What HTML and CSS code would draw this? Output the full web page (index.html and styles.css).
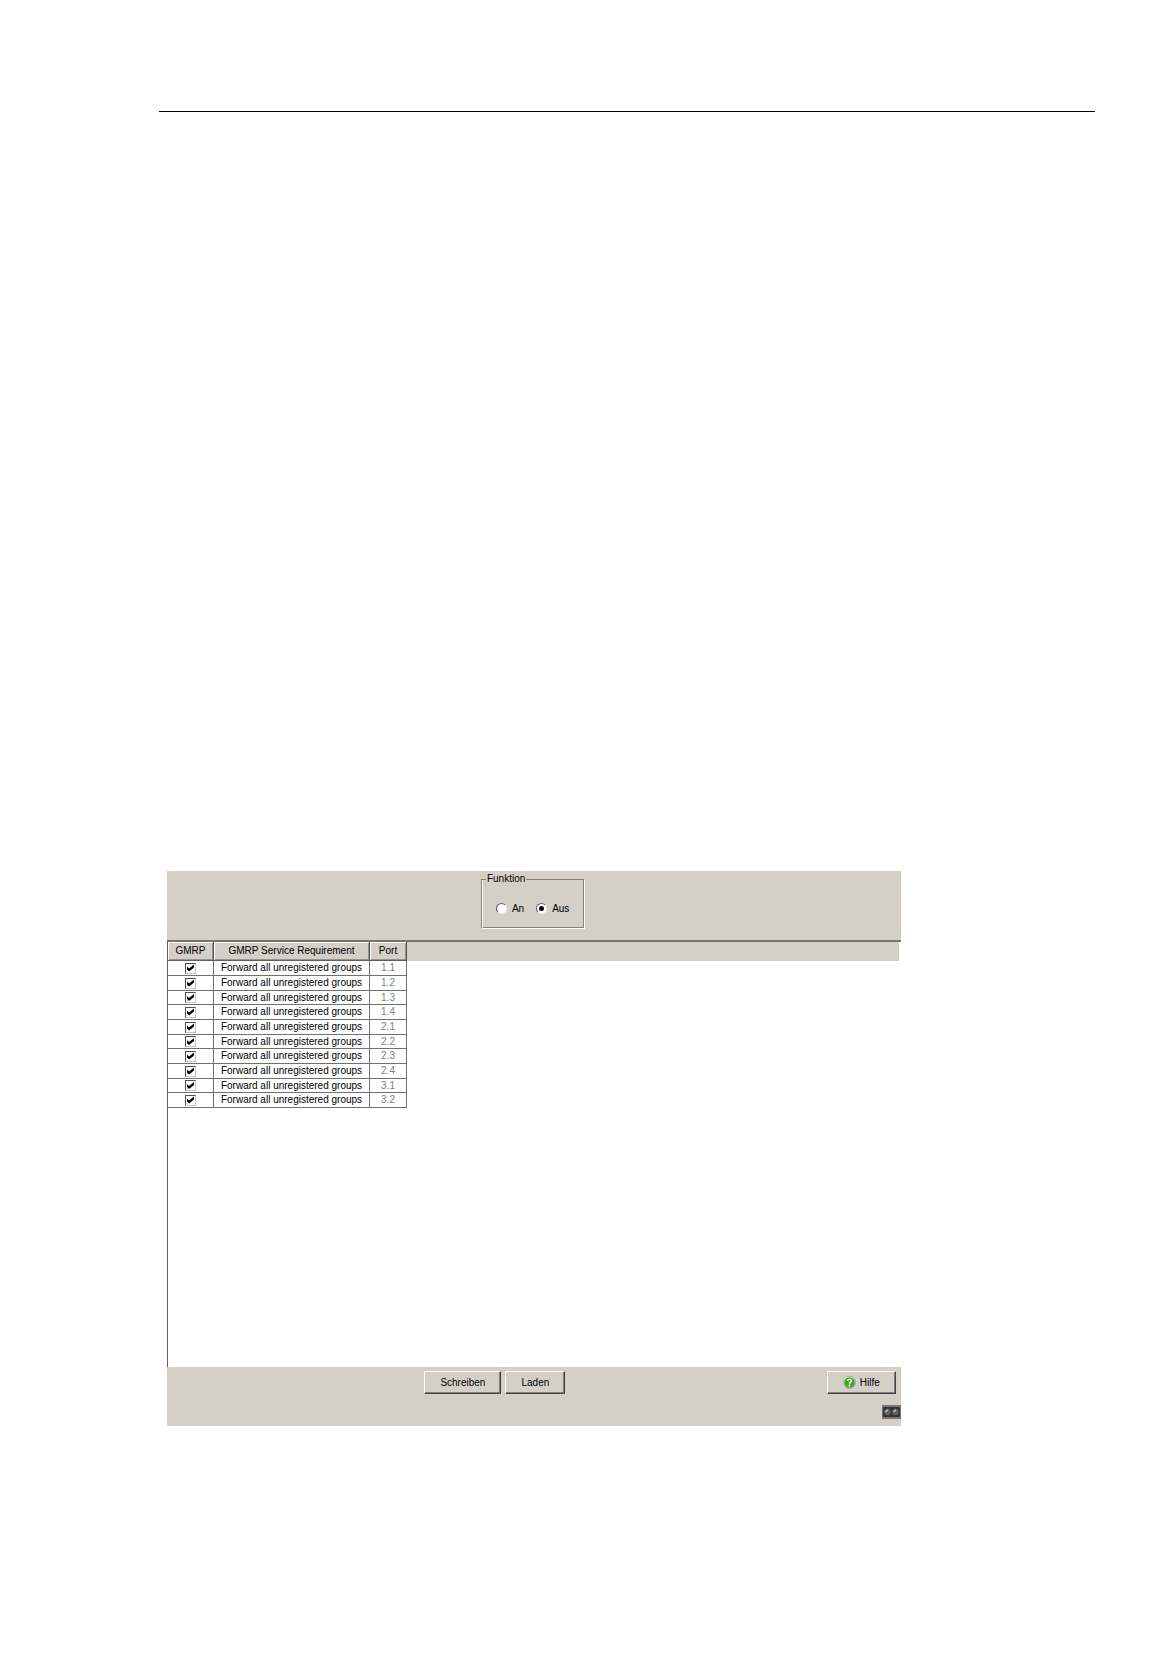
FILE: index.html
```html
<!DOCTYPE html>
<html lang="de">
<head>
<meta charset="utf-8">
<meta name="viewport" content="width=device-width, initial-scale=1">
<title>GMRP</title>
<link rel="stylesheet" href="styles.css">
</head>
<body>
<main class="page">
  <hr class="rule">
  <form class="panel">
    <div class="top">
      <fieldset class="group">
        <legend>Funktion</legend>
        <label class="option"><input type="radio" name="funktion" value="an">An</label>
        <label class="option"><input type="radio" name="funktion" value="aus" checked>Aus</label>
      </fieldset>
    </div>
    <div class="data">
      <div class="head-fill">
      <table class="ports">
        <thead>
          <tr><th class="c-gmrp">GMRP</th><th class="c-service">GMRP Service Requirement</th><th class="c-port">Port</th></tr>
        </thead>
        <tbody>
          <tr><td><input type="checkbox" aria-label="GMRP 1.1" checked></td><td>Forward all unregistered groups</td><td>1.1</td></tr>
          <tr><td><input type="checkbox" aria-label="GMRP 1.2" checked></td><td>Forward all unregistered groups</td><td>1.2</td></tr>
          <tr><td><input type="checkbox" aria-label="GMRP 1.3" checked></td><td>Forward all unregistered groups</td><td>1.3</td></tr>
          <tr><td><input type="checkbox" aria-label="GMRP 1.4" checked></td><td>Forward all unregistered groups</td><td>1.4</td></tr>
          <tr><td><input type="checkbox" aria-label="GMRP 2.1" checked></td><td>Forward all unregistered groups</td><td>2.1</td></tr>
          <tr><td><input type="checkbox" aria-label="GMRP 2.2" checked></td><td>Forward all unregistered groups</td><td>2.2</td></tr>
          <tr><td><input type="checkbox" aria-label="GMRP 2.3" checked></td><td>Forward all unregistered groups</td><td>2.3</td></tr>
          <tr><td><input type="checkbox" aria-label="GMRP 2.4" checked></td><td>Forward all unregistered groups</td><td>2.4</td></tr>
          <tr><td><input type="checkbox" aria-label="GMRP 3.1" checked></td><td>Forward all unregistered groups</td><td>3.1</td></tr>
          <tr><td><input type="checkbox" aria-label="GMRP 3.2" checked></td><td>Forward all unregistered groups</td><td>3.2</td></tr>
        </tbody>
      </table>
      </div>
    </div>
    <div class="bottom">
      <div class="actions">
        <div class="main-actions">
          <button type="button" class="btn btn-write">Schreiben</button>
          <button type="button" class="btn btn-load">Laden</button>
        </div>
        <button type="button" class="btn btn-help">
          <svg width="13" height="13" viewBox="0 0 13 13" aria-hidden="true">
            <circle cx="6.5" cy="6.5" r="6.4" fill="#8a9a86"/>
            <circle cx="6.3" cy="6.3" r="5.9" fill="#d5ead0"/>
            <circle cx="6.5" cy="6.5" r="5.3" fill="#3fa62f"/>
            <path d="M4.6 5.1C4.6 2.6 8.5 2.7 8.4 4.9C8.3 6.1 6.6 6.2 6.5 7.6" fill="none" stroke="#fff" stroke-width="1.4"/>
            <circle cx="6.5" cy="9.5" r="0.9" fill="#fff"/>
          </svg>
          Hilfe
        </button>
      </div>
      <svg class="status" width="19" height="14" viewBox="0 0 19 14" role="img" aria-label="Status">
        <rect width="19" height="14" fill="#777"/>
        <rect x="1" y="2" width="17" height="10" rx="1" fill="#343434"/>
        <circle cx="5.5" cy="7" r="3.2" fill="#626262"/>
        <circle cx="13.5" cy="7" r="3.2" fill="#626262"/>
        <path d="M3.4 7.2L6 4.6M11.4 7.2L14 4.6" stroke="#ccc" stroke-width="1.2"/>
      </svg>
    </div>
  </form>
</main>
</body>
</html>
```
FILE: styles.css
```css
* { box-sizing: border-box; }

body {
  margin: 0;
  background: #fff;
  color: #000;
  font: 10px/12px "Liberation Sans", Arial, sans-serif;
}

.page { padding: 111px 79px 240px 159px; }

.rule {
  height: 1px;
  margin: 0;
  border: 0;
  background: #000;
}

.panel {
  width: 78.4%;
  margin: 759px 0 0 8px;
}

.top {
  display: flex;
  justify-content: center;
  min-height: 71px;
  padding: 2px 2px 11px 0;
  background: #d4d0c8;
  border-bottom: 2px solid #77756f;
}

.group {
  display: flex;
  align-items: center;
  gap: 12px;
  width: 104px;
  margin: 0;
  padding: 4px 14px 0;
  border: 1px solid #808080;
  border-right-color: #fff;
  border-bottom-color: #fff;
  box-shadow: inset 1px 0 #fff, inset -1px 0 #808080, inset 0 -1px #808080;
}

.group legend {
  margin-left: -10px;
  padding: 0 1px;
}

.option {
  display: flex;
  align-items: center;
  gap: 5px;
}

input { appearance: none; margin: 0; }

.option input {
  display: grid;
  place-items: center;
  width: 11px;
  height: 11px;
  border: 1px solid;
  border-color: #606060 #f4f3f0 #f4f3f0 #606060;
  border-radius: 50%;
  background: #fff;
}

.option input:checked::before {
  content: "";
  width: 5px;
  height: 5px;
  border-radius: 50%;
  background: #000;
}

.data {
  min-height: 425px;
  padding-right: 2px;
  border-left: 1px solid #606060;
}

.head-fill {
  background: linear-gradient(#d4d0c8, #d4d0c8) 0 0 / 100% 19px no-repeat;
}

.ports {
  table-layout: fixed;
  width: 239px;
  border-collapse: separate;
  border-spacing: 0;
}

.ports th, .ports td {
  padding: 0;
  text-align: center;
  white-space: nowrap;
}

.ports th {
  height: 19px;
  font-weight: normal;
  background: #d4d0c8;
  border-right: 1px solid #505050;
  border-bottom: 1px solid #606060;
  box-shadow: inset 1px 1px #fff, inset -1px -1px #969490;
}

.c-gmrp { width: 46px; }
.c-service { width: 156px; }
.c-port { width: 37px; }

.ports td {
  height: 15px;
  background: #fff;
  border-right: 1px solid #707070;
  border-bottom: 1px solid #707070;
}

.ports tr:nth-child(3n) td { height: 14px; }
.ports td:last-child { color: #808080; }

.ports input {
  display: block;
  width: 11px;
  height: 11px;
  margin: 0 auto;
  border: 1px solid;
  border-color: #505050 #c8c5be #c8c5be #505050;
}

.ports input:checked::before {
  content: "";
  display: block;
  height: 9px;
  background: #000;
  clip-path: polygon(1px 3px, 3px 5px, 8px 1px, 8px 4px, 3px 8px, 1px 6px);
}

.bottom {
  min-height: 59px;
  padding-top: 4px;
  background: #d4d0c8;
}

.actions {
  display: flex;
  padding-right: 5px;
}

.main-actions {
  display: flex;
  flex: 1;
  justify-content: center;
  gap: 4px;
  padding-right: 4px;
}

.btn {
  display: flex;
  align-items: center;
  justify-content: center;
  gap: 4px;
  height: 23px;
  padding: 0;
  border: 1px solid;
  border-color: #fff #404040 #404040 #fff;
  box-shadow: inset -1px -1px #808080;
  background: #d4d0c8;
  color: #000;
  font: inherit;
}

.btn-write { width: 77px; }
.btn-load { width: 60px; }
.btn-help { width: 69px; }

.status {
  display: block;
  margin: 11px 0 0 auto;
}
```
